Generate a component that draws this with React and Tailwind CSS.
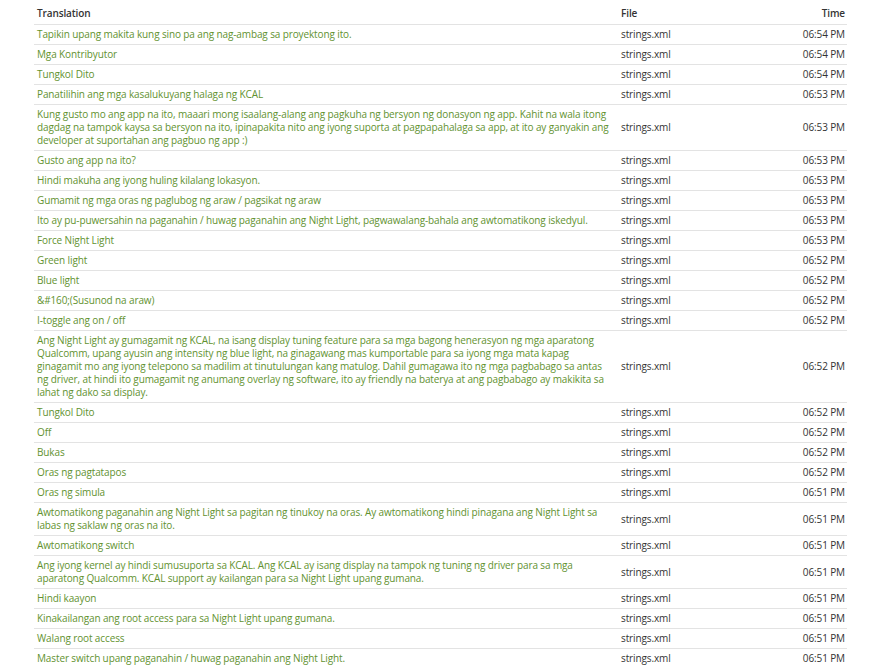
import React from 'react';

const ROWS = [
  ['Tapikin upang makita kung sino pa ang nag-ambag sa proyektong ito.', '06:54 PM'],
  ['Mga Kontribyutor', '06:54 PM'],
  ['Tungkol Dito', '06:54 PM'],
  ['Panatilihin ang mga kasalukuyang halaga ng KCAL', '06:53 PM'],
  ['Kung gusto mo ang app na ito, maaari mong isaalang-alang ang pagkuha ng bersyon ng donasyon ng app. Kahit na wala itong dagdag na tampok kaysa sa bersyon na ito, ipinapakita nito ang iyong suporta at pagpapahalaga sa app, at ito ay ganyakin ang developer at suportahan ang pagbuo ng app :)', '06:53 PM'],
  ['Gusto ang app na ito?', '06:53 PM'],
  ['Hindi makuha ang iyong huling kilalang lokasyon.', '06:53 PM'],
  ['Gumamit ng mga oras ng paglubog ng araw / pagsikat ng araw', '06:53 PM'],
  ['Ito ay pu-puwersahin na paganahin / huwag paganahin ang Night Light, pagwawalang-bahala ang awtomatikong iskedyul.', '06:53 PM'],
  ['Force Night Light', '06:53 PM'],
  ['Green light', '06:52 PM'],
  ['Blue light', '06:52 PM'],
  ['&#160;(Susunod na araw)', '06:52 PM'],
  ['I-toggle ang on / off', '06:52 PM'],
  ['Ang Night Light ay gumagamit ng KCAL, na isang display tuning feature para sa mga bagong henerasyon ng mga aparatong Qualcomm, upang ayusin ang intensity ng blue light, na ginagawang mas kumportable para sa iyong mga mata kapag ginagamit mo ang iyong telepono sa madilim at tinutulungan kang matulog. Dahil gumagawa ito ng mga pagbabago sa antas ng driver, at hindi ito gumagamit ng anumang overlay ng software, ito ay friendly na baterya at ang pagbabago ay makikita sa lahat ng dako sa display.', '06:52 PM'],
  ['Tungkol Dito', '06:52 PM'],
  ['Off', '06:52 PM'],
  ['Bukas', '06:52 PM'],
  ['Oras ng pagtatapos', '06:52 PM'],
  ['Oras ng simula', '06:51 PM'],
  ['Awtomatikong paganahin ang Night Light sa pagitan ng tinukoy na oras. Ay awtomatikong hindi pinagana ang Night Light sa labas ng saklaw ng oras na ito.', '06:51 PM'],
  ['Awtomatikong switch', '06:51 PM'],
  ['Ang iyong kernel ay hindi sumusuporta sa KCAL. Ang KCAL ay isang display na tampok ng tuning ng driver para sa mga aparatong Qualcomm. KCAL support ay kailangan para sa Night Light upang gumana.', '06:51 PM'],
  ['Hindi kaayon', '06:51 PM'],
  ['Kinakailangan ang root access para sa Night Light upang gumana.', '06:51 PM'],
  ['Walang root access', '06:51 PM'],
  ['Master switch upang paganahin / huwag paganahin ang Night Light.', '06:51 PM'],
];

export default function App() {
  return (
    <div className="bg-white min-h-screen pl-[34px] pr-[27px] font-['Open_Sans',sans-serif] text-[10px] leading-[13px] tracking-[-0.12px] text-[#333]">
      <table className="w-full table-fixed border-collapse">
        <colgroup>
          <col className="w-[583px]" />
          <col className="w-[130px]" />
          <col />
        </colgroup>
        <thead>
          <tr className="border-b border-[#e3e3e3]">
            <th className="text-left font-semibold pl-[3px] pt-[7px] pb-[4px]">Translation</th>
            <th className="text-left font-semibold pl-[4px] pt-[7px] pb-[4px]">File</th>
            <th className="text-right font-semibold pr-[2px] pt-[7px] pb-[4px]">Time</th>
          </tr>
        </thead>
        <tbody>
          {ROWS.map(([text, time], i) => (
            <tr key={i} className="border-b border-[#e3e3e3]">
              <td className="text-[#62922f] pl-[3px] pr-[8px] py-[3px] align-middle">{text}</td>
              <td className="pl-[4px] py-[3px] align-middle">strings.xml</td>
              <td className="text-right pr-[2px] py-[3px] align-middle">{time}</td>
            </tr>
          ))}
        </tbody>
      </table>
    </div>
  );
}
